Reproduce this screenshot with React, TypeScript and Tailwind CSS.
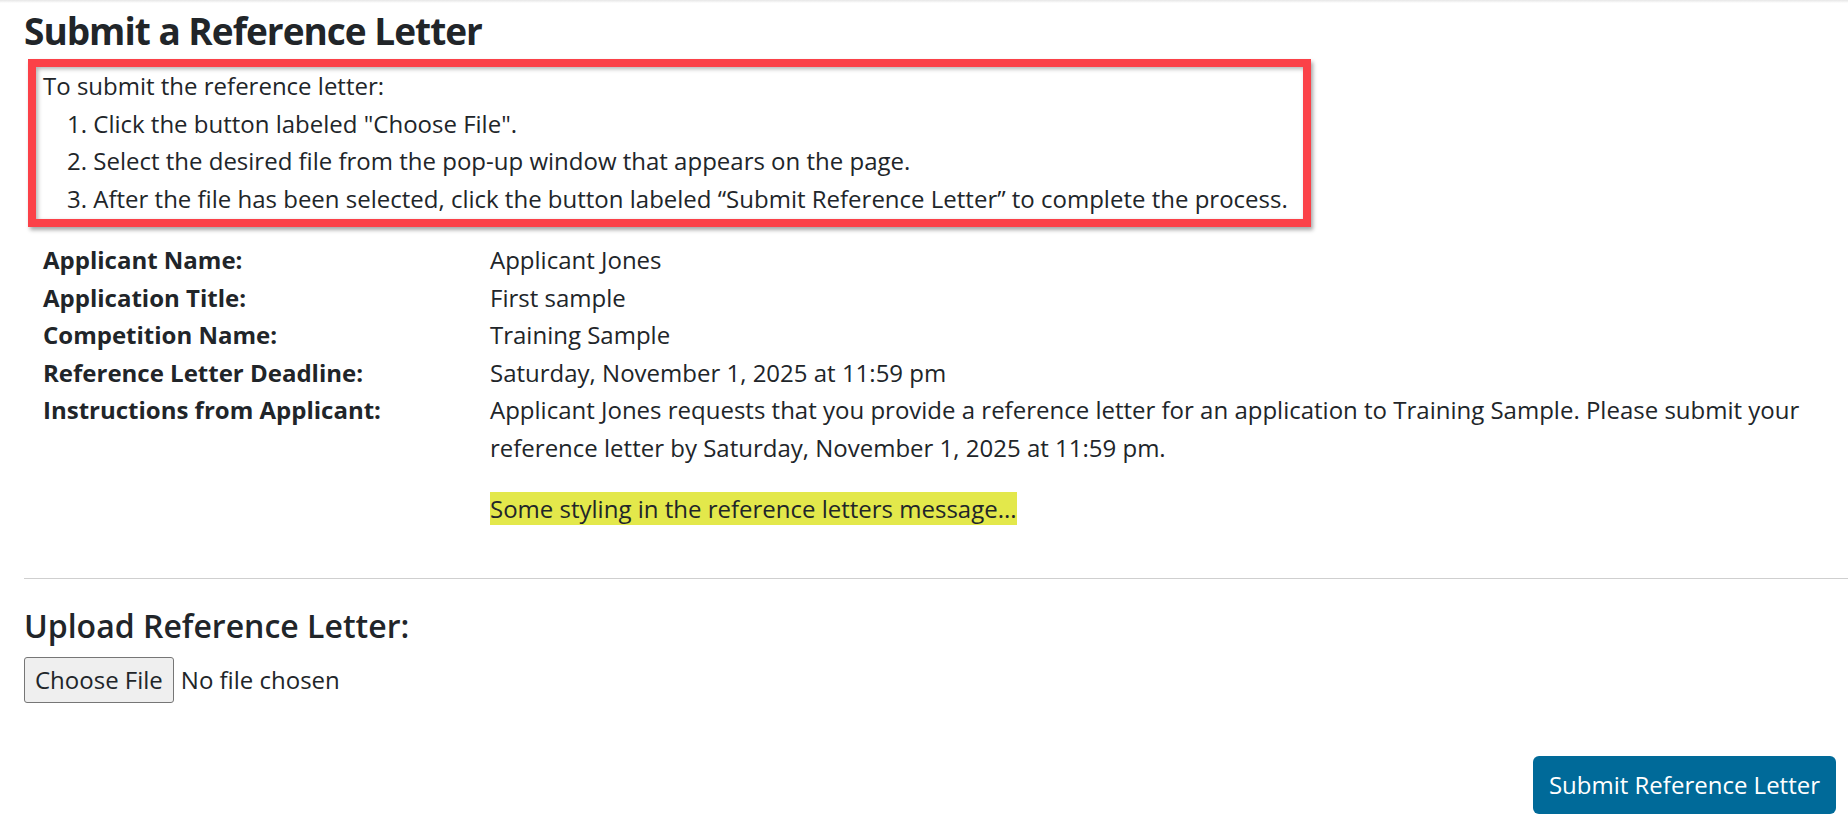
import React from "react";

const details: { label: string; value: React.ReactNode }[] = [
  { label: "Applicant Name:", value: "Applicant Jones" },
  { label: "Application Title:", value: "First sample" },
  { label: "Competition Name:", value: "Training Sample" },
  { label: "Reference Letter Deadline:", value: "Saturday, November 1, 2025 at 11:59 pm" },
];

export default function App() {
  return (
    <div className="min-h-screen bg-white text-[#212529] font-['Open_Sans',sans-serif] text-[24px] leading-[37.5px]">
      <div className="h-[3px] bg-gradient-to-b from-[#e6e6e6] to-white" />
      <div className="pl-6 pr-3 pt-[5px]">
        <h2 className="text-[37px] leading-[46px] font-bold tracking-[-1px] mb-[5px]">
          Submit a Reference Letter
        </h2>

        <div className="ml-1 inline-block border-[8px] border-[#fb4148] pl-[7px] pr-[15px] pb-[2px] shadow-[2px_3px_4px_rgba(0,0,0,0.35),inset_2px_2px_4px_rgba(0,0,0,0.3)]">
          <p>To submit the reference letter:</p>
          <ol className="list-decimal list-inside pl-6">
            <li>Click the button labeled "Choose File".</li>
            <li>Select the desired file from the pop-up window that appears on the page.</li>
            <li>
              After the file has been selected, click the button labeled “Submit Reference Letter” to complete the
              process.
            </li>
          </ol>
        </div>

        <div className="grid grid-cols-[447px_1fr] pl-[19px] mt-[14px]">
          {details.map((d) => (
            <React.Fragment key={d.label}>
              <div className="font-bold">{d.label}</div>
              <div>{d.value}</div>
            </React.Fragment>
          ))}
          <div className="font-bold">Instructions from Applicant:</div>
          <div>
            <p className="mb-6">
              Applicant Jones requests that you provide a reference letter for an application to Training Sample.
              Please submit your reference letter by Saturday, November 1, 2025 at 11:59 pm.
            </p>
            <p>
              <span className="bg-[#e3e84b]">Some styling in the reference letters message...</span>
            </p>
          </div>
        </div>

        <hr className="mt-[50px] border-t border-[#cfcfcf] -mr-3" />

        <h4 className="mt-[28px] text-[32px] leading-[38px] font-semibold">Upload Reference Letter:</h4>
        <div className="mt-[12px] flex items-center">
          <label className="h-[46px] px-[10px] flex items-center bg-[#efefef] border border-[#767676] rounded-[3px] cursor-pointer">
            Choose File
            <input type="file" className="hidden" />
          </label>
          <span className="ml-[7px]">No file chosen</span>
        </div>

        <div className="flex justify-end mt-[53px]">
          <button className="h-[58px] px-4 bg-[#006a99] text-white rounded-[6px]">
            Submit Reference Letter
          </button>
        </div>
      </div>
    </div>
  );
}
